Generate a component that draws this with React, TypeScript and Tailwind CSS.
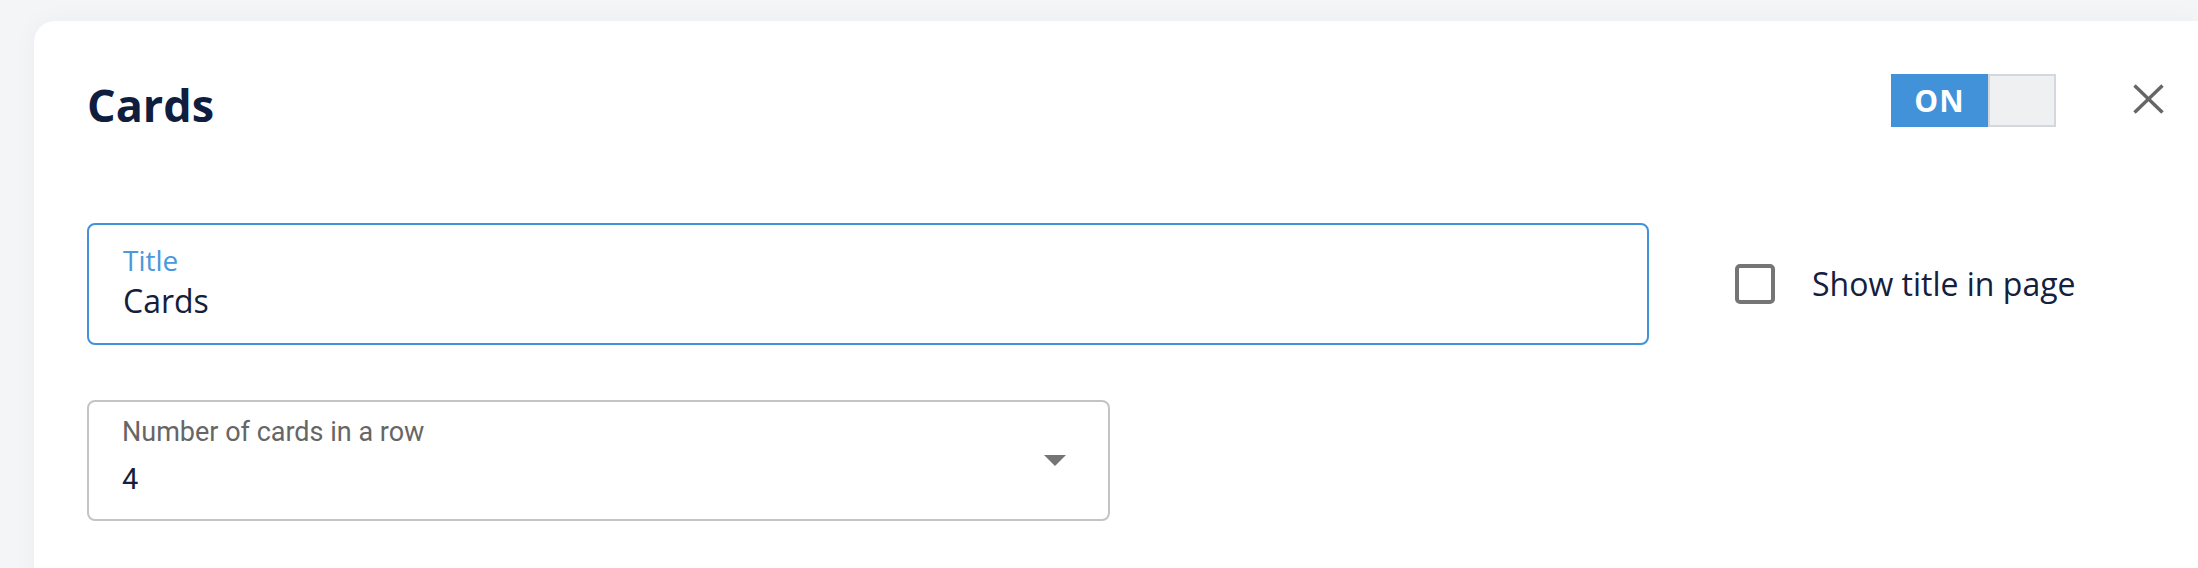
import React from "react";

export default function App() {
  return (
    <div className="w-full h-[568px] overflow-hidden bg-[#f4f5f7] pt-[21px] pl-[34px] font-['Open_Sans',sans-serif]">
      <div className="h-[600px] bg-white rounded-tl-[21px] rounded-bl-[21px] shadow-[0_0_24px_rgba(30,40,70,0.04)] pl-[53px] pr-[34px]">
        {/* Header */}
        <div className="flex items-start">
          <h1 className="flex-1 mt-[61px] text-[45px] leading-none font-bold text-[#0f1e3f]">Cards</h1>
          <div className="flex mt-[53px] h-[53px]">
            <div className="w-[97px] h-full bg-[#4192d9] flex items-center justify-center text-white font-bold text-[30px] leading-none tracking-[1px]">
              ON
            </div>
            <div className="w-[68px] h-full bg-[#eff0f2] border-2 border-[#d3d8df]" />
          </div>
          <button className="ml-[77px] mt-[63px] w-[31px] h-[30px]" aria-label="close">
            <svg width="31" height="30" viewBox="0 0 31 30">
              <line x1="1.5" y1="1.5" x2="29.5" y2="28.5" stroke="#666666" strokeWidth="3.4" />
              <line x1="29.5" y1="1.5" x2="1.5" y2="28.5" stroke="#666666" strokeWidth="3.4" />
            </svg>
          </button>
        </div>

        {/* Title row */}
        <div className="flex items-center mt-[96px]">
          <div className="w-[1562px] h-[122px] border-2 border-[#4192d9] rounded-[8px] pl-[34px] pt-[21px]">
            <div className="text-[28px] leading-none text-[#4a98dd]">Title</div>
            <div className="mt-[11px] text-[32px] leading-none text-[#14203a]">Cards</div>
          </div>
          <div className="ml-[86px] flex items-center">
            <div className="w-[40px] h-[40px] border-[4px] border-[#757575] rounded-[5px]" />
            <span className="ml-[37px] text-[32px] leading-none text-[#14203d]">Show title in page</span>
          </div>
        </div>

        {/* Select */}
        <div className="mt-[55px] w-[1023px] h-[121px] border-2 border-[#c4c4c4] rounded-[8px] flex items-center pl-[33px] pr-[42px]">
          <div className="flex-1 self-start pt-[17px] font-['Roboto',sans-serif]">
            <div className="text-[27px] leading-none text-[#666666]">Number of cards in a row</div>
            <div className="mt-[19px] text-[29px] leading-none text-[#14203d]">4</div>
          </div>
          <svg width="22" height="11" viewBox="0 0 22 11">
            <polygon points="0,0 22,0 11,11" fill="#757575" />
          </svg>
        </div>
      </div>
    </div>
  );
}
